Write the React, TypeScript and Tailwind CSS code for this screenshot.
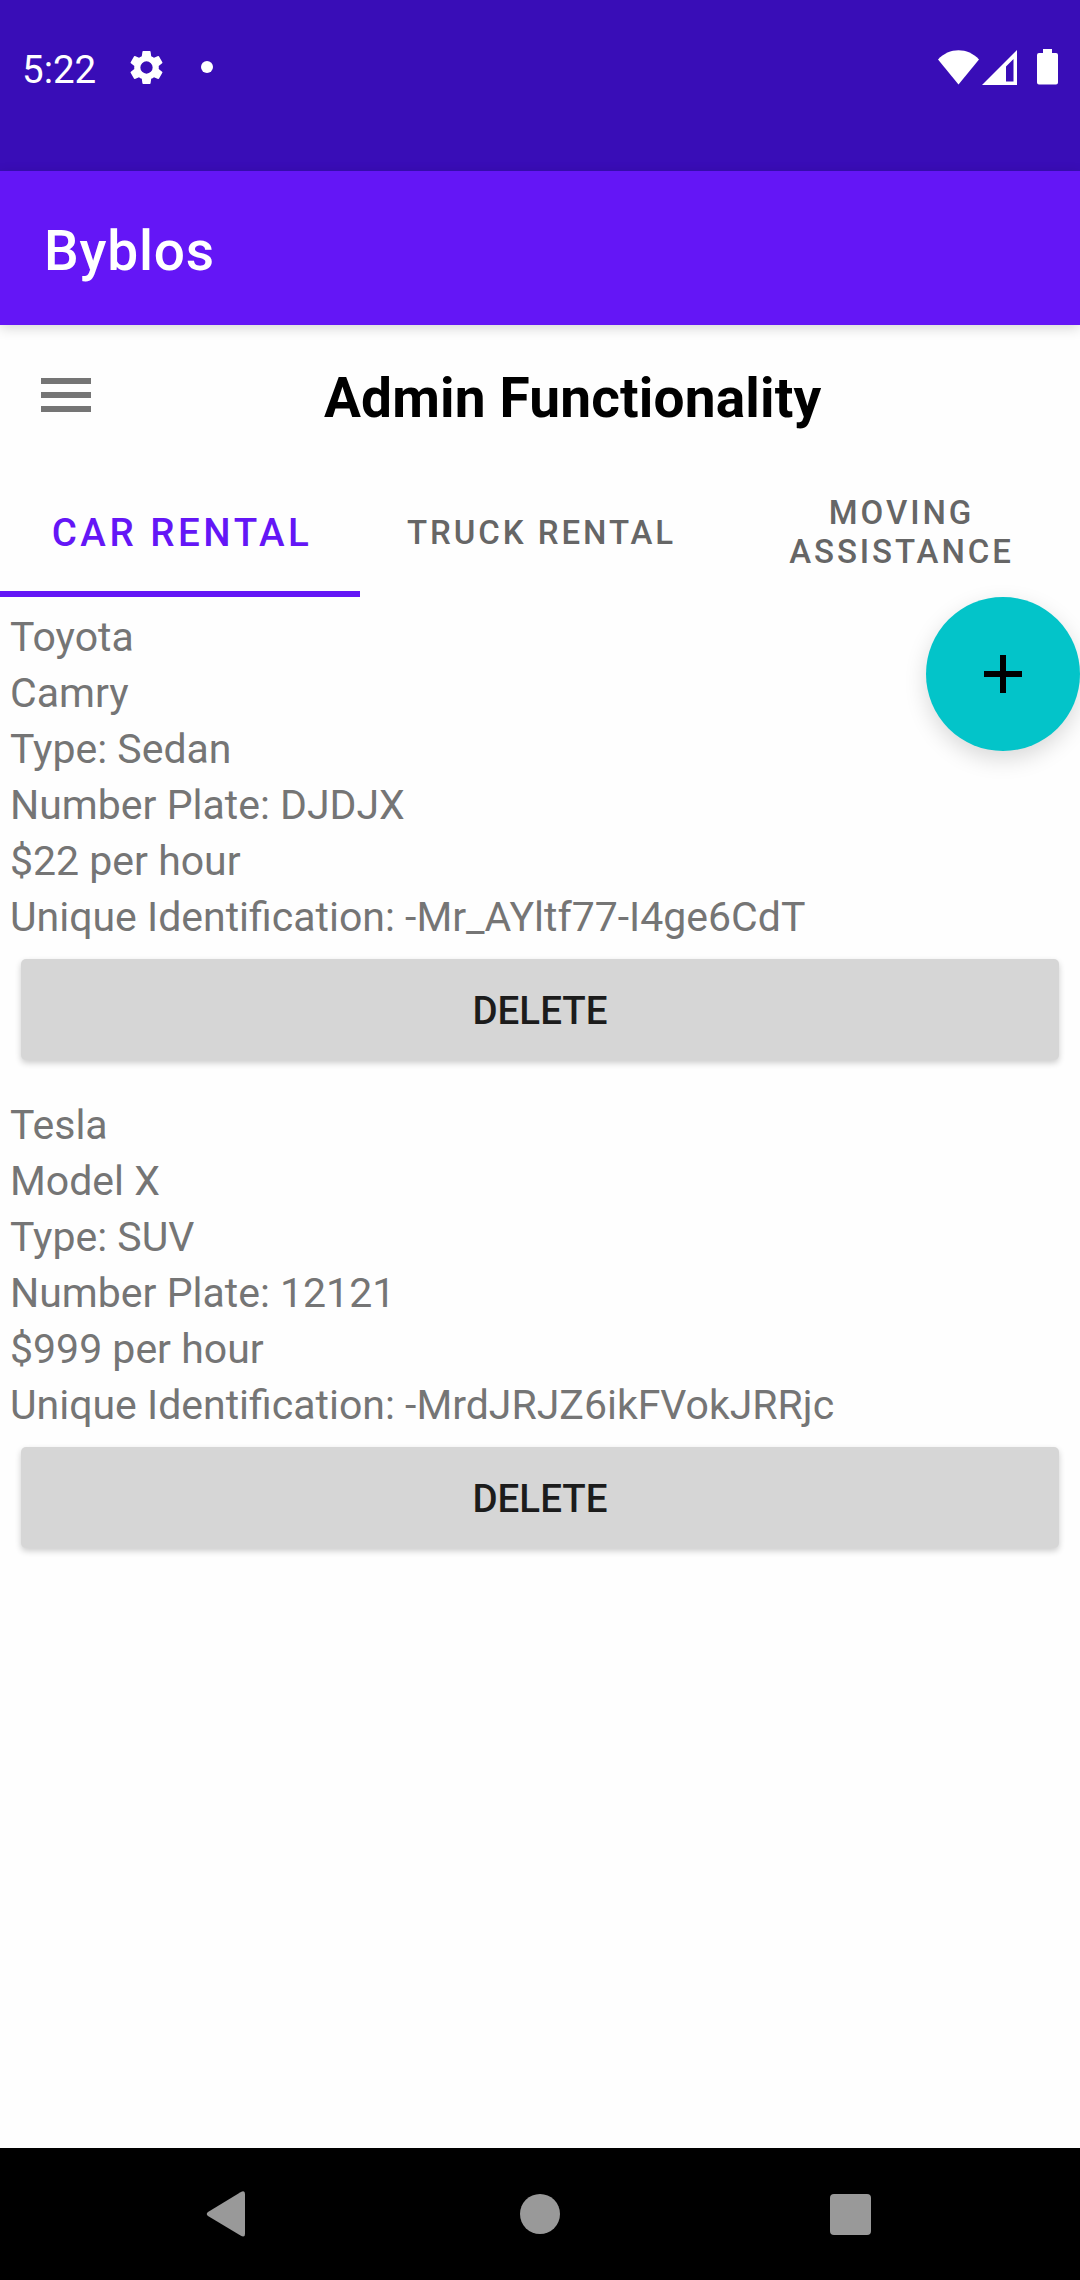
const vehicles = [
  {
    brand: "Toyota",
    model: "Camry",
    type: "Sedan",
    plate: "DJDJX",
    rate: 22,
    id: "-Mr_AYltf77-I4ge6CdT",
  },
  {
    brand: "Tesla",
    model: "Model X",
    type: "SUV",
    plate: "12121",
    rate: 999,
    id: "-MrdJRJZ6ikFVokJRRjc",
  },
];

type Vehicle = (typeof vehicles)[number];

function StatusBar() {
  return (
    <header className="flex h-[171px] items-start bg-[#390db7] pt-[42px] text-white">
      <span className="ml-[22px] mt-px w-[76px] text-[38.5px] leading-[54px]">5:22</span>
      <svg className="ml-[28px] mt-[5px] size-[41px]" viewBox="0 0 24 24" fill="currentColor">
        <path d="M19.14 12.94c.04-.3.06-.61.06-.94 0-.32-.02-.64-.07-.94l2.03-1.58a.49.49 0 0 0 .12-.61l-1.92-3.32a.49.49 0 0 0-.59-.22l-2.39.96a7 7 0 0 0-1.62-.94l-.36-2.54a.48.48 0 0 0-.48-.41h-3.84a.47.47 0 0 0-.47.41l-.36 2.54c-.59.24-1.13.57-1.62.94l-2.39-.96a.48.48 0 0 0-.59.22L2.74 8.87a.47.47 0 0 0 .12.61l2.03 1.58c-.05.3-.09.63-.09.94s.02.64.07.94l-2.03 1.58a.49.49 0 0 0-.12.61l1.92 3.32c.12.22.37.29.59.22l2.39-.96c.5.38 1.03.7 1.62.94l.36 2.54c.05.24.24.41.48.41h3.84c.24 0 .44-.17.47-.41l.36-2.54a7 7 0 0 0 1.62-.94l2.39.96c.22.08.47 0 .59-.22l1.92-3.32a.47.47 0 0 0-.12-.61zM12 15.6a3.6 3.6 0 1 1 0-7.2 3.6 3.6 0 0 1 0 7.2z" />
      </svg>
      <span className="ml-[34px] mt-[19px] size-[12px] rounded-full bg-white" />
      <svg className="ml-auto mt-[8px] h-[35px] w-[41px]" viewBox="0 0 41 35" fill="currentColor">
        <path d="M0 9.5C5.5 3.5 13 .3 20.500.3S35.500 3.500 41 9.500L20.500 34.500Z" />
      </svg>
      <svg className="ml-[3px] mt-[8px] h-[35px] w-[35px]" viewBox="0 0 35 35" fill="currentColor" fillRule="evenodd">
        <path d="M35 0V35H0ZM31.500 9L24 16.500V31.500H31.500Z" />
      </svg>
      <svg className="ml-[20px] mr-[22px] mt-[7px] h-[36px] w-[21px]" viewBox="0 0 21 36" fill="currentColor">
        <path d="M6 0h9v4h4a2 2 0 0 1 2 2v27.500a2 2 0 0 1-2 2H2a2 2 0 0 1-2-2V6a2 2 0 0 1 2-2h4Z" />
      </svg>
    </header>
  );
}

function Tabs() {
  return (
    <nav className="grid h-[132px] grid-cols-3 text-center font-medium text-[#666666]">
      <button className="border-b-[6px] border-[#6416f6] pl-[4px] pt-[9px] text-[38.5px] leading-[45px] tracking-[3.55px] text-[#6416f6]">
        CAR RENTAL
      </button>
      <button className="pl-[3px] pt-[2px] text-[33px] leading-[39px] tracking-[2.95px]">TRUCK RENTAL</button>
      <button className="pl-[33px] pr-[30px] pt-[2px] text-[33px] leading-[39px] tracking-[2.95px]">
        MOVING ASSISTANCE
      </button>
    </nav>
  );
}

function VehicleItem({ vehicle }: { vehicle: Vehicle }) {
  return (
    <li className="h-[488px]">
      <div className="pl-[10px] text-[41px] leading-[56px] text-[#757575]">
        <p>{vehicle.brand}</p>
        <p>{vehicle.model}</p>
        <p>Type: {vehicle.type}</p>
        <p>Number Plate: {vehicle.plate}</p>
        <p>${vehicle.rate} per hour</p>
        <p>Unique Identification: {vehicle.id}</p>
      </div>
      <button className="mx-[21px] mt-[14px] h-[101px] w-[1038px] rounded-[5px] bg-[#d6d6d6] pt-px text-[38.5px] font-medium leading-[45px] text-[#1c1c1c] shadow-[0_3px_6px_rgba(0,0,0,0.2)]">
        DELETE
      </button>
    </li>
  );
}

export default function App() {
  return (
    <div className="flex h-[2280px] w-[1080px] flex-col overflow-hidden bg-[#fefefe] font-['Roboto',sans-serif]">
      <StatusBar />
      <div className="z-10 flex h-[154px] items-center bg-[#6416f6] pl-[44px] text-[55px] font-medium leading-[64px] tracking-[0.8px] text-white shadow-[0_3px_12px_rgba(0,0,0,0.16)]">
        <span className="mt-[6px]">Byblos</span>
      </div>
      <div className="flex h-[140px] items-center">
        <svg className="ml-[41px] h-[34px] w-[50px]" viewBox="0 0 50 34" fill="#757575">
          <path d="M0 0h50v6H0zM0 14h50v6H0zM0 28h50v6H0z" />
        </svg>
        <h1 className="ml-[233px] mt-[6px] text-[55px] font-bold leading-[64px] tracking-[0.16px] text-black">
          Admin Functionality
        </h1>
      </div>
      <Tabs />
      <main className="relative flex-1 pt-[12px]">
        <ul>
          {vehicles.map((vehicle) => (
            <VehicleItem key={vehicle.id} vehicle={vehicle} />
          ))}
        </ul>
        <button
          aria-label="Add vehicle"
          className="absolute right-0 top-0 flex size-[154px] items-center justify-center rounded-full bg-[#03c4c9] shadow-[0_8px_22px_rgba(0,0,0,0.15)]"
        >
          <svg className="size-[38px]" viewBox="0 0 38 38" fill="#000">
            <path d="M16 0h6v16H38v6H22V38h-6V22H0v-6h16z" />
          </svg>
        </button>
      </main>
      <footer className="flex h-[132px] items-center bg-black text-[#999999]">
        <svg className="ml-[206px] h-[46px] w-[40px]" viewBox="0 0 40 46" fill="currentColor">
          <path d="M34.500 1.200Q39 -1.500 39 3V43Q39 47 34.500 44.600L2 25Q-.5 23 2 21Z" />
        </svg>
        <span className="ml-[274px] size-[40px] rounded-full bg-[#999999]" />
        <span className="ml-[270px] mt-px h-[41px] w-[41px] rounded-[4px] bg-[#999999]" />
      </footer>
    </div>
  );
}
